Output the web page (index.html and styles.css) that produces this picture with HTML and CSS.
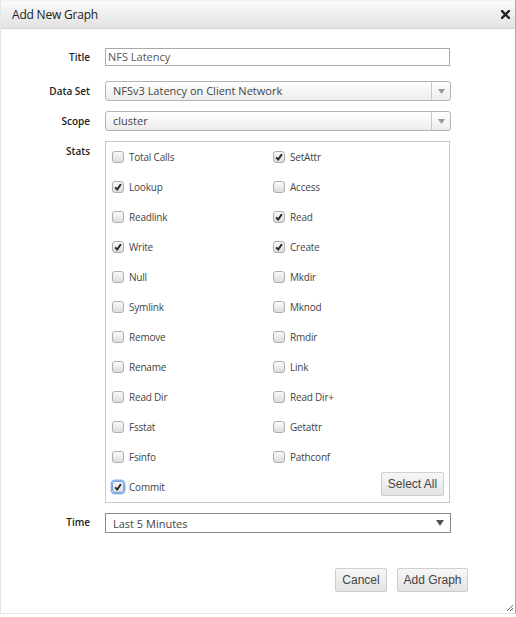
FILE: index.html
```html
<!DOCTYPE html>
<html>
<head>
<meta charset="utf-8">
<link rel="stylesheet" href="styles.css">
</head>
<body>
<div class="dialog">
  <div class="titlebar">
    <span class="title-text">Add New Graph</span>
    <svg class="close" width="9" height="9" viewBox="0 0 9 9"><path d="M1 1 L8 8 M8 1 L1 8" stroke="#222" stroke-width="2.4" stroke-linecap="square"/></svg>
  </div>
  <div class="form">
    <div class="row row-title">
      <label class="lbl">Title</label>
      <div class="textinput">NFS Latency</div>
    </div>
    <div class="row row-dataset">
      <label class="lbl">Data Set</label>
      <div class="combo"><span class="combo-text">NFSv3 Latency on Client Network</span><span class="combo-btn"><svg width="7" height="5" viewBox="0 0 7 5"><path d="M0 0 H7 L3.5 5 Z" fill="#999"/></svg></span></div>
    </div>
    <div class="row row-scope">
      <label class="lbl">Scope</label>
      <div class="combo"><span class="combo-text">cluster</span><span class="combo-btn"><svg width="7" height="5" viewBox="0 0 7 5"><path d="M0 0 H7 L3.5 5 Z" fill="#999"/></svg></span></div>
    </div>
    <div class="row row-stats">
      <label class="lbl">Stats</label>
      <div class="statsbox">
        <div class="cb"><span class="box"></span>Total Calls</div>
        <div class="cb"><span class="box on"><svg viewBox="0 0 12 12"><path d="M2.5 6.5 L5 9 L9.5 2.5" fill="none" stroke="#2a2a2a" stroke-width="2.3"/></svg></span>SetAttr</div>
        <div class="cb"><span class="box on"><svg viewBox="0 0 12 12"><path d="M2.5 6.5 L5 9 L9.5 2.5" fill="none" stroke="#2a2a2a" stroke-width="2.3"/></svg></span>Lookup</div>
        <div class="cb"><span class="box"></span>Access</div>
        <div class="cb"><span class="box"></span>Readlink</div>
        <div class="cb"><span class="box on"><svg viewBox="0 0 12 12"><path d="M2.5 6.5 L5 9 L9.5 2.5" fill="none" stroke="#2a2a2a" stroke-width="2.3"/></svg></span>Read</div>
        <div class="cb"><span class="box on"><svg viewBox="0 0 12 12"><path d="M2.5 6.5 L5 9 L9.5 2.5" fill="none" stroke="#2a2a2a" stroke-width="2.3"/></svg></span>Write</div>
        <div class="cb"><span class="box on"><svg viewBox="0 0 12 12"><path d="M2.5 6.5 L5 9 L9.5 2.5" fill="none" stroke="#2a2a2a" stroke-width="2.3"/></svg></span>Create</div>
        <div class="cb"><span class="box"></span>Null</div>
        <div class="cb"><span class="box"></span>Mkdir</div>
        <div class="cb"><span class="box"></span>Symlink</div>
        <div class="cb"><span class="box"></span>Mknod</div>
        <div class="cb"><span class="box"></span>Remove</div>
        <div class="cb"><span class="box"></span>Rmdir</div>
        <div class="cb"><span class="box"></span>Rename</div>
        <div class="cb"><span class="box"></span>Link</div>
        <div class="cb"><span class="box"></span>Read Dir</div>
        <div class="cb"><span class="box"></span>Read Dir+</div>
        <div class="cb"><span class="box"></span>Fsstat</div>
        <div class="cb"><span class="box"></span>Getattr</div>
        <div class="cb"><span class="box"></span>Fsinfo</div>
        <div class="cb"><span class="box"></span>Pathconf</div>
        <div class="cb"><span class="box on focus"><svg viewBox="0 0 12 12"><path d="M2.5 6.5 L5 9 L9.5 2.5" fill="none" stroke="#2a2a2a" stroke-width="2.3"/></svg></span>Commit</div>
        <div class="selcell"><button class="btn btn-select">Select All</button></div>
      </div>
    </div>
    <div class="row row-time">
      <label class="lbl">Time</label>
      <div class="nselect"><span>Last 5 Minutes</span><svg width="8" height="6" viewBox="0 0 8 6"><path d="M0 0 H8 L4 6 Z" fill="#555"/></svg></div>
    </div>
    <div class="actions">
      <button class="btn btn-cancel">Cancel</button>
      <button class="btn btn-add">Add Graph</button>
    </div>
  </div>
  <svg class="grip" width="8" height="8" viewBox="0 0 8 8"><path d="M7 1 L1 7 M7 4 L4 7 M7 6.5 L6.5 7" stroke="#666" stroke-width="1"/></svg>
</div>
</body>
</html>
```
FILE: styles.css
```css
* { box-sizing: border-box; }
html, body { margin: 0; padding: 0; background: #fff; }
body { font-family: "Open Sans", "Noto Sans", sans-serif; color: #333; }

.dialog {
  position: relative;
  width: 516px;
  height: 614px;
  border-left: 1px solid #e6e6e6;
  border-right: 1px solid #a8a8a8;
  border-bottom: 1px solid #e6e6e6;
  background: #fff;
}

.titlebar {
  height: 29px;
  background: linear-gradient(#fafafa, #e2e2e2);
  border-bottom: 1px solid #d6d6d6;
  border-top: 1px solid #f2f2f2;
  display: flex;
  align-items: center;
  justify-content: space-between;
  padding: 0 5px 0 11px;
}
.title-text { font-size: 12px; color: #222; letter-spacing: -0.2px; }
.close { display: block; }

.form { padding-top: 19px; }
.row { display: flex; align-items: flex-start; gap: 15px; }
.lbl {
  width: 89px;
  flex: none;
  text-align: right;
  font-size: 10px;
  font-weight: 600;
  line-height: 16px;
  color: #222;
}
.row-title .lbl { margin-top: 1px; }
.row-dataset { margin-top: 15px; }
.row-dataset .lbl { margin-top: 2px; }
.row-scope { margin-top: 10px; }
.row-scope .lbl { margin-top: 2px; }
.row-stats { margin-top: 10px; }
.row-stats .lbl { margin-top: 2px; }
.row-time { margin-top: 10px; }
.row-time .lbl { margin-top: 1px; }

.textinput {
  width: 345px;
  height: 18px;
  border: 1px solid #a9a9a9;
  font-size: 11px;
  line-height: 16px;
  padding-left: 2px;
  color: #555;
}

.combo {
  width: 346px;
  height: 20px;
  border: 1px solid #b4b4b4;
  border-radius: 3px;
  background: linear-gradient(#ffffff, #ececec);
  display: flex;
  align-items: center;
}
.combo-text { flex: 1; font-size: 11px; color: #444; padding-left: 7px; line-height: 18px; }
.combo-btn {
  width: 19px;
  height: 18px;
  border-left: 1px solid #c8c8c8;
  display: flex;
  align-items: center;
  justify-content: center;
}
.combo-btn svg { display: block; }

.statsbox {
  width: 345px;
  border: 1px solid #c8c8c8;
  display: grid;
  grid-template-columns: 161px 1fr;
  grid-auto-rows: 30px;
  padding-left: 6px;
  padding-right: 5px;
}
.cb {
  display: flex;
  align-items: center;
  height: 16px;
  margin-top: 7px;
  font-size: 10px;
  letter-spacing: -0.2px;
  color: #444;
}
.box {
  width: 12px;
  height: 12px;
  border: 1px solid #adadad;
  border-radius: 3px;
  background: linear-gradient(#fbfbfb, #dcdcdc);
  margin-right: 5px;
  flex: none;
  display: block;
}
.box svg { display: block; width: 10px; height: 10px; }
.box.focus { box-shadow: 0 0 0 1.5px #8ab4ee; border-color: #7c9ed6; }
.selcell { display: flex; justify-content: flex-end; align-items: flex-start; }

.btn {
  font-family: "Liberation Sans", Arial, sans-serif;
  font-size: 12px;
  color: #444;
  background: linear-gradient(#f7f7f7, #e3e3e3);
  border: 1px solid #cfcfcf;
  border-radius: 2px;
  height: 24px;
  padding: 0;
}
.btn-select { width: 63px; margin-top: 0; }
.btn-cancel { width: 52px; }
.btn-add { width: 71px; }

.nselect {
  width: 346px;
  height: 20px;
  border: 1px solid #8a8a8a;
  display: flex;
  align-items: center;
  justify-content: space-between;
  padding: 0 6px 0 7px;
  font-size: 11px;
  color: #444;
}
.nselect svg { display: block; }

.actions {
  display: flex;
  justify-content: flex-end;
  gap: 10px;
  margin-top: 35px;
  padding-right: 47px;
}

.grip { position: absolute; right: 1px; bottom: 1px; }
```
